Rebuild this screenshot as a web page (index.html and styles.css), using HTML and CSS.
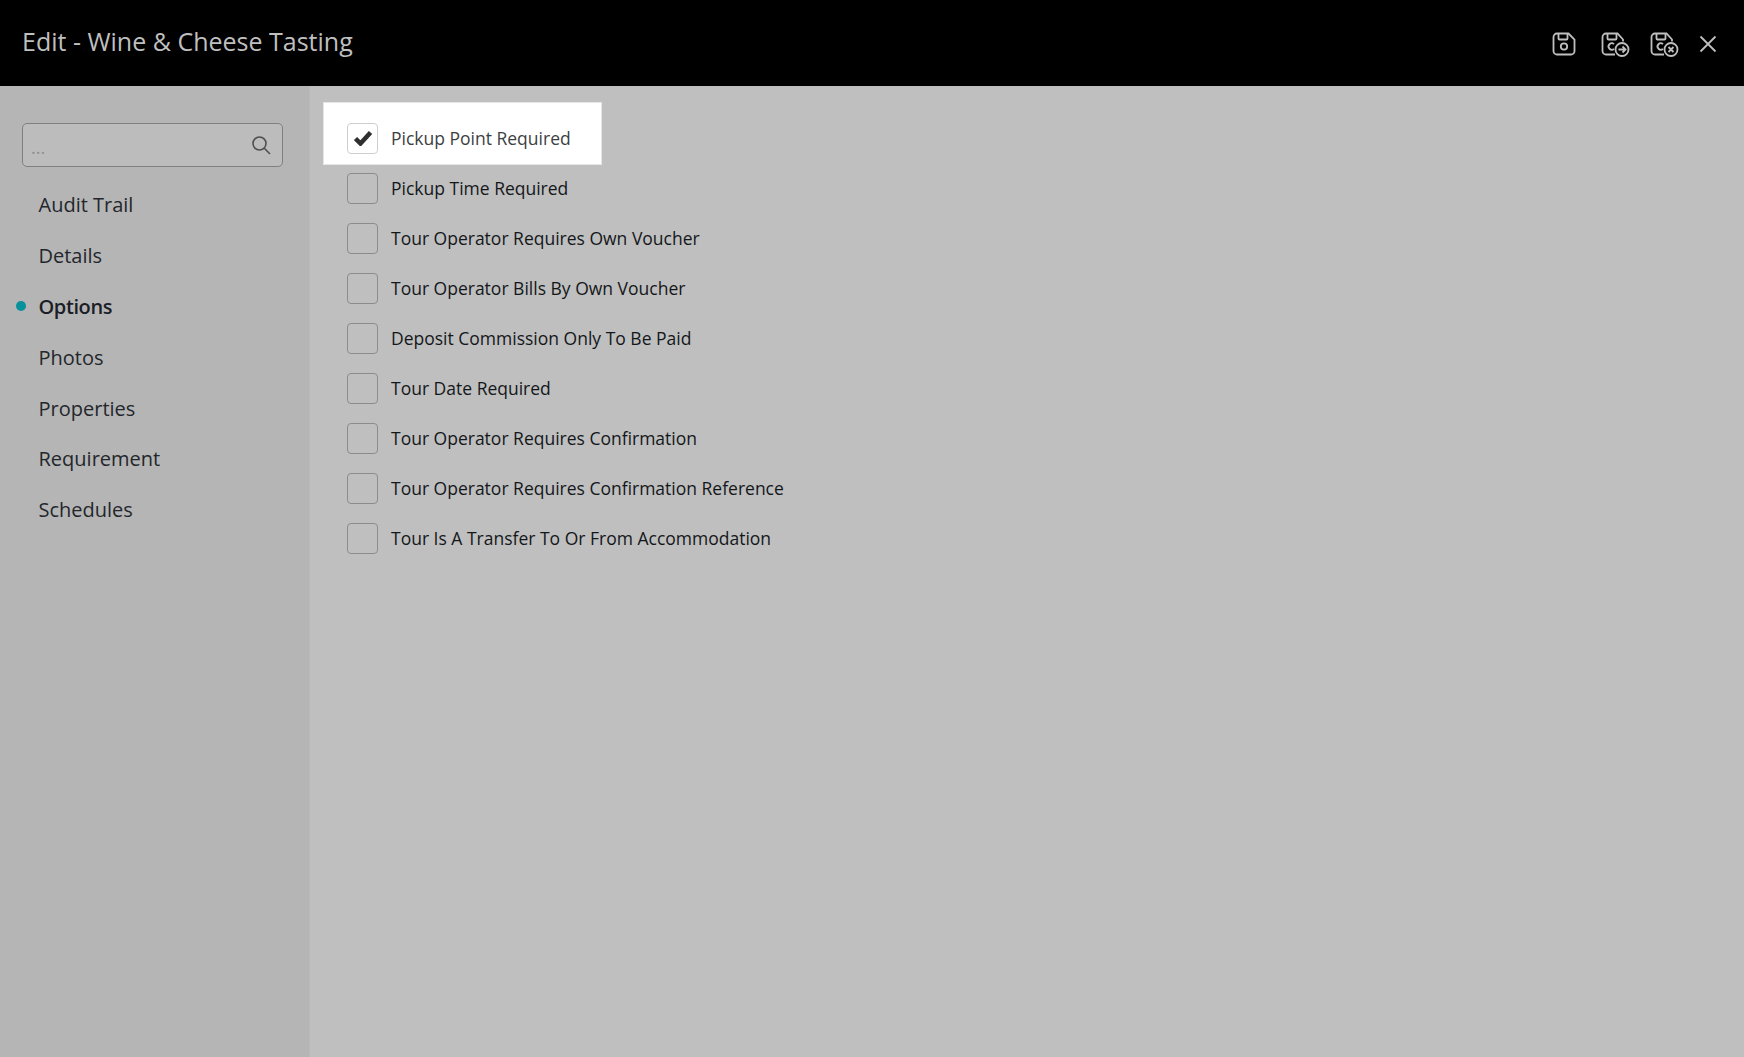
FILE: index.html
```html
<!DOCTYPE html>
<html>
<head>
<meta charset="utf-8">
<title>Edit - Wine &amp; Cheese Tasting</title>
<link rel="stylesheet" href="styles.css">
</head>
<body>
<header class="topbar">
  <h1>Edit - Wine &amp; Cheese Tasting</h1>
  <div class="actions">
    <svg class="save" width="26" height="26" viewBox="0 0 26 26"><path d="M6 2.500h11.500l6 6V20a3.500 3.500 0 0 1-3.500 3.500H6A3.500 3.500 0 0 1 2.500 20V6A3.500 3.500 0 0 1 6 2.500z"/><path d="M7.500 2.500v5a1 1 0 0 0 1 1h7a1 1 0 0 0 1-1v-5"/><circle cx="13" cy="15.500" r="3.200"/></svg>
    <svg class="save-next" width="30" height="26" viewBox="0 0 30 26"><path d="M15 23.500H6A3.500 3.500 0 0 1 2.500 20V6A3.500 3.500 0 0 1 6 2.500h11.500l5.500 6v2"/><path d="M7.500 2.500v5a1 1 0 0 0 1 1h7a1 1 0 0 0 1-1v-5"/><path d="M14 13.200a3.200 3.200 0 1 0 0 4.600"/><circle cx="22" cy="18.500" r="6.500"/><path d="M18.500 18.500h6.500M22.500 15.500l3 3-3 3"/></svg>
    <svg class="save-close" width="30" height="26" viewBox="0 0 30 26"><path d="M15 23.500H6A3.500 3.500 0 0 1 2.500 20V6A3.500 3.500 0 0 1 6 2.500h11.500l5.500 6v2"/><path d="M7.500 2.500v5a1 1 0 0 0 1 1h7a1 1 0 0 0 1-1v-5"/><path d="M14 13.200a3.200 3.200 0 1 0 0 4.600"/><circle cx="22" cy="18.500" r="6.500"/><path d="M19.500 16l5 5M24.500 16l-5 5"/></svg>
    <svg class="close" width="18" height="18" viewBox="0 0 18 18"><path d="M1.500 1.500l15 15M16.500 1.500l-15 15"/></svg>
  </div>
</header>
<div class="page">
  <aside class="sidebar">
    <div class="search">
      <span class="placeholder">...</span>
      <svg width="20" height="20" viewBox="0 0 20 20"><circle cx="8.500" cy="8.500" r="6.500"/><path d="M13.300 13.300l5.700 5.700"/></svg>
    </div>
    <nav class="menu">
      <a>Audit Trail</a>
      <a>Details</a>
      <a class="active">Options</a>
      <a>Photos</a>
      <a>Properties</a>
      <a>Requirement</a>
      <a>Schedules</a>
    </nav>
  </aside>
  <main class="options">
    <div class="option checked">
      <span class="box"><svg width="18" height="16" viewBox="0 0 18 16"><path d="M1.500 8.500l5 5L16.500 2.500"/></svg></span>
      <span>Pickup Point Required</span>
    </div>
    <div class="option"><span class="box"></span><span>Pickup Time Required</span></div>
    <div class="option"><span class="box"></span><span>Tour Operator Requires Own Voucher</span></div>
    <div class="option"><span class="box"></span><span>Tour Operator Bills By Own Voucher</span></div>
    <div class="option"><span class="box"></span><span>Deposit Commission Only To Be Paid</span></div>
    <div class="option"><span class="box"></span><span>Tour Date Required</span></div>
    <div class="option"><span class="box"></span><span>Tour Operator Requires Confirmation</span></div>
    <div class="option"><span class="box"></span><span>Tour Operator Requires Confirmation Reference</span></div>
    <div class="option"><span class="box"></span><span>Tour Is A Transfer To Or From Accommodation</span></div>
  </main>
</div>
</body>
</html>
```

FILE: styles.css
```css
html, body {
    height: 100%;
}
body {
    margin: 0;
    display: flex;
    flex-direction: column;
    font-family: "Open Sans", "Liberation Sans", sans-serif;
    background-color: #bfbfbf;
    color: #14171a;
    overflow: hidden;
}
.topbar {
    height: 86px;
    flex: none;
    display: flex;
    align-items: center;
    justify-content: space-between;
    padding: 0 27px 0 22px;
    background-color: #000;
}
.topbar h1 {
    margin: 0 0 4px;
    font-size: 25px;
    font-weight: 400;
    color: #bfbfbf;
}
.actions {
    display: flex;
    align-items: center;
    gap: 22px;
    margin-top: 2px;
}
.actions svg, .search svg {
    fill: none;
    stroke-width: 1.8;
}
.actions svg {
    stroke: #bfbfbf;
}
.actions .save-next {
    margin-left: 1px;
}
.actions .save-close {
    margin-left: -3px;
}
.actions .close {
    margin-left: -2px;
}
.page {
    flex: 1;
    display: flex;
}
.sidebar {
    width: 310px;
    flex: none;
    padding: 37px 0 0 22px;
    box-sizing: border-box;
    background-color: #b5b5b5;
    border-right: 1px solid #b9b9b9;
}
.search {
    width: 261px;
    height: 44px;
    box-sizing: border-box;
    display: flex;
    align-items: center;
    justify-content: space-between;
    padding: 0 11px 0 8px;
    background-color: #bcbcbc;
    border: 1px solid #808080;
    border-radius: 5px;
}
.search svg {
    stroke: #4f4f4f;
    stroke-width: 1.6;
}
.placeholder {
    font-size: 18px;
    color: #8f8f8f;
    margin-top: 4px;
}
.menu {
    display: flex;
    flex-direction: column;
    margin-top: 12px;
}
.menu a {
    position: relative;
    height: 50.900px;
    line-height: 51px;
    padding-left: 16.500px;
    font-size: 20px;
    color: #23272c;
}
.menu a.active {
    font-weight: 600;
    letter-spacing: -0.4px;
    color: #1b1e26;
}
.menu a.active::before {
    content: "";
    position: absolute;
    left: -6px;
    top: 20px;
    width: 10px;
    height: 10px;
    border-radius: 50%;
    background-color: #06919c;
}
.options {
    flex: 1;
    padding: 16px 0 0 13px;
}
.option {
    display: flex;
    align-items: center;
    gap: 13px;
    height: 50px;
    padding-left: 24px;
    box-sizing: border-box;
    font-size: 17.500px;
    white-space: nowrap;
}
.option.checked {
    width: 279px;
    height: 63px;
    margin-bottom: -2px;
    padding: 9px 0 0 23px;
    background-color: #fff;
    border: 1px solid #e6e6e6;
    color: #3d3f42;
}
.box {
    width: 31px;
    height: 31px;
    flex: none;
    box-sizing: border-box;
    display: flex;
    align-items: center;
    justify-content: center;
    border: 1px solid #8c8c8c;
    border-radius: 4px;
}
.checked .box {
    border-color: #cfcfcf;
}
.box svg {
    fill: none;
    stroke: #2f2f2f;
    stroke-width: 4.5;
}
```
